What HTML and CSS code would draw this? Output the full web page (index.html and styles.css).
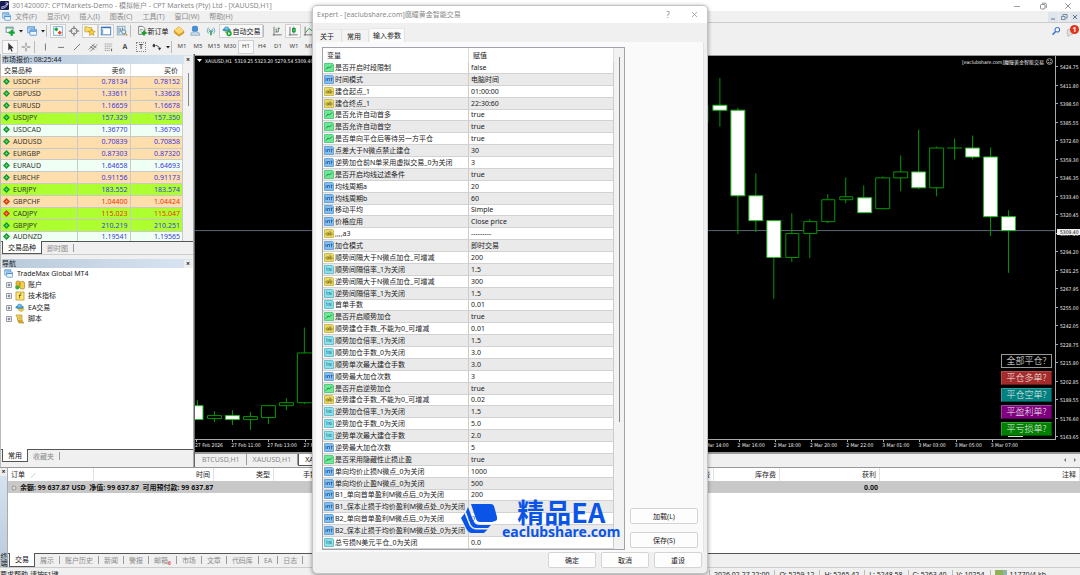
FILE: index.html
```
<!DOCTYPE html>
<html lang="zh-CN">
<head>
<meta charset="utf-8">
<title>301420007: CPTMarkets-Demo</title>
<link rel="stylesheet" href="styles.css">
</head>
<body>
<svg class="defs" aria-hidden="true">
  <symbol id="up" viewBox="0 0 8 8"><path d="M4 0 8 4 4 8 0 4Z" fill="#129a36"/><path d="M4 2.500v3M2.500 4h3" stroke="#7fe07f" stroke-width=".8"/></symbol>
  <symbol id="down" viewBox="0 0 8 8"><path d="M4 0 8 4 4 8 0 4Z" fill="#d83a12"/><path d="M4 2.500v3M2.500 4h3" stroke="#ff9a70" stroke-width=".8"/></symbol>
  <symbol id="bool" viewBox="0 0 10 9"><path d="M.5.5h8l1 1v7h-9z" fill="#6fe896" stroke="#5cc982"/><path d="M2 6.500 4 4l1.500 1L8 2.500" fill="none" stroke="#1a8f48"/></symbol>
  <symbol id="int" viewBox="0 0 10 9"><path d="M.5.5h8l1 1v7h-9z" fill="#86bdec" stroke="#6aa5d6"/><path d="M2 3v3M3.500 6V3.500h2V6M7.500 2.500v3.800M6.700 3.500h1.800" fill="none" stroke="#1d5fa8" stroke-width=".8"/></symbol>
  <symbol id="str" viewBox="0 0 10 9"><path d="M.5.5h8l1 1v7h-9z" fill="#e8d968" stroke="#c9bb58"/><path d="M4.300 3.500v3M6 2v4.500" fill="none" stroke="#7c6d12" stroke-width=".8"/><circle cx="3.200" cy="5" r="1.200" fill="none" stroke="#7c6d12" stroke-width=".7"/><circle cx="7" cy="5" r="1.200" fill="none" stroke="#7c6d12" stroke-width=".7"/></symbol>
  <symbol id="dbl" viewBox="0 0 10 9"><path d="M.5.5h8l1 1v7h-9z" fill="#8fe0ea" stroke="#68c0cd"/><path d="M2 3.500 3 2.700V6M5 6.200V3l2 3V2.700" fill="none" stroke="#2d8fa2" stroke-width=".8"/></symbol>
  <symbol id="windows" viewBox="0 0 12 12"><rect x="1" y="1" width="8" height="7" fill="#d5eafa" stroke="#5597d3"/><path d="M1 2.500h8" stroke="#5597d3"/><rect x="3.500" y="4" width="8" height="7" rx="1" fill="#eef7ff" stroke="#4b90cf"/><path d="M3.500 6h8" stroke="#4b90cf" stroke-width="1.500"/></symbol>
  <symbol id="caret" viewBox="0 0 6 6"><path d="M1 2h4L3 4.500Z" fill="#222"/></symbol>
  <symbol id="plusbox" viewBox="0 0 6 6"><path d="M.5.5h5v5h-5z" fill="#fff" stroke="#9a9a9a"/><path d="M1.500 3h3M3 1.500v3" stroke="#3a4f8a" stroke-width=".8"/></symbol>
  <symbol id="scroll" viewBox="0 0 10 10"><path d="M1 1h6v6H3L2 3Z" fill="#f4dc6c" stroke="#b58b1b" stroke-width=".7"/><path d="M3 7h4l2 2H4Z" fill="#e4b82a" stroke="#a67b10" stroke-width=".6"/><path d="M3.500 3h2.500M3.500 4.800h2.500" stroke="#b58b1b" stroke-width=".6"/></symbol>
  <symbol id="hat" viewBox="0 0 12 11"><path d="M4 5l5 0 2 2-3 3-4-2z" fill="#f2c537" stroke="#b78a15" stroke-width=".5"/><ellipse cx="5.500" cy="4.500" rx="5" ry="1.900" fill="#3c94c5"/><ellipse cx="5.500" cy="3" rx="2.800" ry="2.200" fill="#6cbce2" stroke="#2c7ba6" stroke-width=".5"/></symbol>
</svg>

<div class="app">
  <header class="titlebar">
    <svg class="logo" viewBox="0 0 10 10"><rect width="10" height="10" rx="1" fill="#151a55"/><path d="M1 7Q5 6.500 8.500 3M1.500 8.500Q6 8 8 5M6 2l3 .5L8 5" fill="none" stroke="#e6ecff" stroke-width=".9"/></svg>
    <span class="grow">301420007: CPTMarkets-Demo - 模拟帐户 - CPT Markets (Pty) Ltd - [XAUUSD,H1]</span>
    <button class="wbtn" aria-label="最小化"><svg viewBox="0 0 8 8"><path d="M1 4.500h6" stroke="#888" stroke-width=".8"/></svg></button>
    <button class="wbtn" aria-label="还原"><svg viewBox="0 0 8 8"><rect x="1.500" y="2.500" width="4.500" height="4.500" rx="1" fill="none" stroke="#777" stroke-width=".8"/><path d="M3 1.200h3.300q1 0 1 1V6" fill="none" stroke="#777" stroke-width=".8"/></svg></button>
    <button class="wbtn" aria-label="关闭"><svg viewBox="0 0 8 8"><path d="m1.300 1.300 5.400 5.400m0-5.400-5.400 5.400" stroke="#777" stroke-width=".8"/></svg></button>
  </header>
  <nav class="menu">
    <svg class="ic9"><use href="#windows"/></svg>
    <button>文件(F)</button><button>显示(V)</button><button>插入(I)</button><button>图表(C)</button><button>工具(T)</button><button>窗口(W)</button><button>帮助(H)</button>
    <span class="grow"></span>
    <button class="mdi" aria-label="最小化图表"><svg viewBox="0 0 8 8"><path d="M2 6h4" stroke="#5c7890"/></svg></button>
    <button class="mdi" aria-label="还原图表"><svg viewBox="0 0 8 8"><path d="M1.500 3.500h3.500v3H1.500zM3 3V1.500h4V5H5.500" fill="none" stroke="#5c7890" stroke-width=".8"/></svg></button>
    <button class="mdi" aria-label="关闭图表"><svg viewBox="0 0 8 8"><path d="m2 2 4 4m0-4L2 6" stroke="#5c7890"/></svg></button>
  </nav>
  <div class="toolbar first">
    <button class="tb" aria-label="新图表"><svg viewBox="0 0 14 14"><rect x="2.500" y="2.500" width="8" height="6" fill="#fff" stroke="#5b8aa5"/><path d="M2 3.500h9" stroke="#43a05c"/><path d="M9 5.500v7M5.500 9h7" stroke="#12a52c" stroke-width="2.600"/></svg></button>
    <button class="tb slim" aria-label="更多图表"><svg><use href="#caret"/></svg></button>
    <button class="tb" aria-label="配置文件"><svg viewBox="-1 -1 14 14"><use href="#windows" width="12" height="12"/></svg></button>
    <button class="tb slim" aria-label="更多配置"><svg><use href="#caret"/></svg></button>
    <i class="sep"></i>
    <button class="tb on" aria-label="市场报价"><svg viewBox="0 0 14 14"><rect x="2" y="2" width="10" height="10" fill="#fff" stroke="#6c9fd0"/><path d="M5 2.500 7.500 5 5 7.500 2.500 5Z" fill="#17a43a"/><path d="m9 6.500 2.500 2.500L9 11.500 6.500 9Z" fill="#e04b20"/></svg></button>
    <button class="tb" aria-label="数据窗口"><svg viewBox="0 0 14 14"><circle cx="7" cy="7" r="3.600" fill="none" stroke="#666"/><path d="M7 .8v4.500M7 8.700v4.500M.8 7h4.500M8.700 7h4.500" stroke="#666"/></svg></button>
    <button class="tb on" aria-label="导航"><svg viewBox="0 0 14 14"><path d="M1 2h3l1 1h4v5H1z" fill="#f6dc69" stroke="#b99024" stroke-width=".7"/><path d="m9 4.500 1.200 2.600 2.800.3-2 2 .6 2.800L9 10.800l-2.600 1.400.6-2.800-2-2 2.800-.3z" fill="#ffcf31" stroke="#b3841c" stroke-width=".7"/></svg></button>
    <button class="tb on" aria-label="终端"><svg viewBox="0 0 14 14"><rect x="1.500" y="2.500" width="11" height="9" fill="#fff" stroke="#3273b8"/><path d="M2 3h10" stroke="#3273b8" stroke-width="1.500"/><path d="M3 5v6" stroke="#79aee0" stroke-width="1.500"/></svg></button>
    <button class="tb" aria-label="策略测试"><svg viewBox="0 0 14 14"><rect x="1.500" y="1.500" width="9" height="10" fill="#e2eef6" stroke="#8aa3b5"/><path d="M3.500 3v7M5.500 4v4M7.500 3v5" stroke="#4f7b9c"/><circle cx="9" cy="8" r="2.400" fill="#d9f1ff" stroke="#5c7e98"/><path d="m10.800 9.800 2.200 2.500" stroke="#c99a2e" stroke-width="1.500"/></svg></button>
    <i class="sep"></i>
    <button class="tb text"><svg viewBox="0 0 12 14"><path d="M2 1.500h5l2.500 2.500v7H2z" fill="#fff" stroke="#666"/><path d="M3.500 5h4M3.500 7h3" stroke="#8a8a8a"/><path d="M8.500 6.500v6M5.500 9.500h6" stroke="#12a52c" stroke-width="2.400"/></svg>新订单</button>
    <button class="tb" aria-label="市场"><svg viewBox="0 0 14 14"><path d="M1.500 6 7 2l5.500 5v2.500L7 13l-5.500-4z" fill="#e5a829" stroke="#a36e0c" stroke-width=".6"/><path d="M1.500 6 7 2l5.500 5L7 10.500z" fill="#ffd970"/></svg></button>
    <button class="tb" aria-label="社区"><svg viewBox="0 0 14 14"><rect x="4" y="1.500" width="6" height="6" rx="1.500" fill="#3d8fe0" stroke="#2368ac" stroke-width=".6"/><path d="M2 12q0-4 3-4h4q3.500 0 3.500 4z" fill="#c5dced" stroke="#7894a8" stroke-width=".7"/></svg></button>
    <button class="tb" aria-label="信号"><svg viewBox="0 0 14 14"><path d="M4 3Q1 6.500 4 10M5.500 4.500q-1.500 2 0 4M10 3q3 3.500 0 7M8.500 4.500q1.500 2 0 4" fill="none" stroke="#5b9ec4"/><path d="M7 6v6" stroke="#36a64f" stroke-width="2"/></svg></button>
    <button class="tb text on"><svg viewBox="0 0 12 14"><use href="#hat" y="1" width="12" height="11"/><circle cx="8.500" cy="10" r="3.200" fill="#18a83a"/><path d="m7.500 8.300 2.700 1.700-2.700 1.700z" fill="#fff"/></svg>自动交易</button>
    <i class="sep wide"></i>
    <button class="tb" aria-label="柱状图"><svg viewBox="0 0 14 14"><path d="M3.500 2v10.500M2 11.500h10.500M6 4v5M8.500 3v5" fill="none" stroke="#666"/><path d="M6 8h2.500M8.500 4h2" stroke="#1a9a40"/></svg></button>
    <button class="tb on" aria-label="阴阳烛"><svg viewBox="0 0 14 14"><path d="M3.500 2v10.500M2 11.500h10.500" stroke="#666"/><path d="M8 2v8" stroke="#128434"/><rect x="6.500" y="4" width="3" height="4" fill="#3cc865" stroke="#128434"/></svg></button>
    <button class="tb" aria-label="折线图"><svg viewBox="0 0 14 14"><path d="M2.500 2v10.500M1 11.500h11" stroke="#666"/><path d="m3 9 4-5 4 3" fill="none" stroke="#1a9a40"/></svg></button>
    <span class="grow"></span>
    <button class="tb" aria-label="搜索"><svg viewBox="0 0 14 14"><circle cx="8.500" cy="5.500" r="2.700" fill="#fff" stroke="#3a6fd0" stroke-width="1.200"/><path d="m6.500 7.500-3.500 4" stroke="#3a6fd0" stroke-width="1.800"/></svg></button>
    <button class="tb bell" aria-label="通知"><svg viewBox="0 0 14 14"><path d="M1 8.500q0-4 4-4h4v5q-1 2-4 2l-2.500 2z" fill="#ddd" stroke="#aaa" stroke-width=".7"/></svg><b>1</b></button>
  </div>
  <div class="toolbar second">
    <button class="tb on" aria-label="光标"><svg viewBox="0 0 14 14"><path d="M5 2v9l2.200-2 1.600 3.500 1.300-.7L8.600 8.500h2.800z" fill="#333"/></svg></button>
    <button class="tb" aria-label="十字准线"><svg viewBox="0 0 14 14"><path d="M7 2v4M7 8v4M2 7h4M8 7h4" stroke="#666"/></svg></button>
    <i class="sep thin"></i>
    <button class="tb" aria-label="垂直线"><svg viewBox="0 0 14 14"><path d="M7.500 3v8" stroke="#666"/></svg></button>
    <button class="tb" aria-label="水平线"><svg viewBox="0 0 14 14"><path d="M3.500 7.500h7" stroke="#666"/></svg></button>
    <button class="tb" aria-label="趋势线"><svg viewBox="0 0 14 14"><path d="m3.500 10.500 7-7" stroke="#666"/></svg></button>
    <button class="tb" aria-label="通道"><svg viewBox="0 0 14 14"><path d="m2 10 7-7M4 12l8-8M3.500 6.500 9 10M5.500 4.500 11 8" stroke="#555" stroke-width=".8"/></svg></button>
    <button class="tb" aria-label="斐波纳契"><svg viewBox="0 0 14 14"><path d="M2 3.500h9M2 6h9M2 8.500h7M2 11h6" stroke="#777" stroke-width=".8" stroke-dasharray="1.500 .7"/><path d="M10 9v3" stroke="#444"/></svg></button>
    <button class="tb letter">A</button>
    <button class="tb letter"><span class="dotted">T</span></button>
    <button class="tb" aria-label="箭头"><svg viewBox="0 0 14 14"><path d="m3.500 3 2 2.500-2 2-2-2zM8 8h4l-2 3z" fill="#333"/><path d="m6 5 4 2.500" stroke="#333"/></svg></button>
    <button class="tb slim" aria-label="更多箭头"><svg><use href="#caret"/></svg></button>
    <i class="sep thin"></i>
    <button class="tb tf">M1</button><button class="tb tf">M5</button><button class="tb tf">M15</button><button class="tb tf">M30</button><button class="tb tf on">H1</button><button class="tb tf">H4</button><button class="tb tf">D1</button><button class="tb tf">W1</button><button class="tb tf">MN</button>
  </div>

  <div class="work">
    <aside class="side">
      <section class="watch">
        <h2 class="ptitle"><span>市场报价: 08:25:44</span><button aria-label="关闭">×</button></h2>
        <div class="watchbody">
          <table class="quotes">
            <thead><tr><th>交易品种</th><th>卖价</th><th>买价</th></tr></thead>
            <tbody>
            <tr class="o"><td><svg><use href="#up"/></svg>USDCHF</td><td>0.78134</td><td>0.78152</td></tr>
            <tr class="o"><td><svg><use href="#up"/></svg>GBPUSD</td><td>1.33611</td><td>1.33628</td></tr>
            <tr class="o"><td><svg><use href="#up"/></svg>EURUSD</td><td>1.16659</td><td>1.16678</td></tr>
            <tr class="g"><td><svg><use href="#up"/></svg>USDJPY</td><td>157.329</td><td>157.350</td></tr>
            <tr class="m"><td><svg><use href="#up"/></svg>USDCAD</td><td>1.36770</td><td>1.36790</td></tr>
            <tr class="o"><td><svg><use href="#up"/></svg>AUDUSD</td><td>0.70839</td><td>0.70858</td></tr>
            <tr class="o"><td><svg><use href="#up"/></svg>EURGBP</td><td>0.87303</td><td>0.87320</td></tr>
            <tr class="m"><td><svg><use href="#up"/></svg>EURAUD</td><td>1.64658</td><td>1.64693</td></tr>
            <tr class="o"><td><svg><use href="#up"/></svg>EURCHF</td><td>0.91156</td><td>0.91173</td></tr>
            <tr class="g"><td><svg><use href="#up"/></svg>EURJPY</td><td>183.552</td><td>183.574</td></tr>
            <tr class="o dn"><td><svg><use href="#down"/></svg>GBPCHF</td><td>1.04400</td><td>1.04424</td></tr>
            <tr class="g dn"><td><svg><use href="#down"/></svg>CADJPY</td><td>115.023</td><td>115.047</td></tr>
            <tr class="g"><td><svg><use href="#up"/></svg>GBPJPY</td><td>210.219</td><td>210.251</td></tr>
            <tr class="m"><td><svg><use href="#up"/></svg>AUDNZD</td><td>1.19541</td><td>1.19565</td></tr>
            </tbody>
          </table>
          <div class="vbar"><i></i></div>
        </div>
        <div class="tabs"><button class="sel">交易品种</button><button>即时图</button></div>
      </section>
      <section class="navi">
        <h2 class="ptitle"><span>导航</span><button aria-label="关闭">×</button></h2>
        <div class="tree">
          <p><svg class="ic9"><use href="#windows"/></svg>TradeMax Global MT4</p>
          <ul>
            <li><svg class="pb"><use href="#plusbox"/></svg><svg class="ic10" viewBox="0 0 10 10"><rect x="1" y="1" width="4" height="7" rx="1.500" fill="#e9bb30" stroke="#9e7612" stroke-width=".6"/><rect x="5" y="1.500" width="4.500" height="7.500" rx="1.500" fill="#f3cf4b" stroke="#9e7612" stroke-width=".6"/><circle cx="2.300" cy="7.500" r="2" fill="#2bb53f"/></svg>账户</li>
            <li><svg class="pb"><use href="#plusbox"/></svg><svg class="ic10" viewBox="0 0 10 10"><rect x="1" y="1" width="8" height="8" fill="#ffe873" stroke="#b7962a" stroke-width=".8"/><path d="M6.500 2.500q-1.500-.5-1.700 1.500L4.300 7.500M3.700 4.500h2.600" fill="none" stroke="#705a10" stroke-width=".8"/></svg>技术指标</li>
            <li><svg class="pb"><use href="#plusbox"/></svg><svg class="ic10"><use href="#hat"/></svg>EA交易</li>
            <li><svg class="pb"><use href="#plusbox"/></svg><svg class="ic10"><use href="#scroll"/></svg>脚本</li>
          </ul>
        </div>
        <div class="tabs"><button class="sel">常用</button><button>收藏夹</button></div>
      </section>
    </aside>

    <main class="charts">
      <div class="chart">
        <div class="plot">
          <svg viewBox="195 56 861 385" preserveAspectRatio="none">
            <path d="M195 231.500H1056" stroke="#5d6878"/>
            <g fill="#000" stroke="#009a00">
              <path d="M197.500 402v6M214.500 413v11M232.500 412v15M250.500 414v18M268.500 407v19M286.500 400v12M304.500 329v77M720.500 78v49M738.500 108v127M756.500 174v59M774.500 221v79M792.500 214v49M810.500 220v39M828.500 195v29M846.500 178v26M864.500 186v20M883.500 177v10M901.500 156v36M919.500 130v60M937.500 147v50M955.500 139v21M948 148.500h15M973.500 136v24M991.500 148v89M1009.500 211v63"/>
              <path d="M207.500 417.500h14v3h-14zM243.500 418.500h14v3h-14zM261.500 407.500h14v12h-14zM279.500 404.500h14v3h-14zM297.500 354.500h16v50h-16zM695.500 105.500h13v17h-13zM786.500 234.500h13v24h-13zM804.500 222.500h13v12h-13zM822.500 200.500h13v22h-13zM840.500 197.500h13v3h-13zM876.500 178.500h14v31h-14zM894.500 172.500h14v6h-14zM930.500 148.500h14v40h-14z"/>
            </g>
            <path d="M194 407.500h9v14h-9zM225.500 417.500h14v4h-14zM713.500 105.500h14v5h-14zM731.500 110.500h14v86h-14zM749.500 196.500h14v25h-14zM767.500 221.500h14v37h-14zM858.500 198.500h14v15h-14zM912.500 172.500h14v16h-14zM966.500 148.500h14v9h-14zM984.500 157.500h14v60h-14zM1002.500 217.500h14v14h-14z" fill="#fff" stroke="#22bb22"/>
            <path d="M1009 438.500h15" stroke="#ddd"/>
          </svg>
          <div class="info"><svg><path d="M0 1h5L2.500 4Z" fill="#fff"/></svg>XAUUSD,H1&nbsp; 5319.25 5323.20 5279.54 5309.40</div>
          <div class="ea">[eaclubshare.com]魔瞳黄金智能交易 <svg viewBox="0 0 8 8"><g fill="none" stroke="#fff" stroke-width=".7"><circle cx="4" cy="4" r="3.300"/><path d="M2.300 4.800q1.700 1.800 3.400 0M2.700 2.500v1M5.300 2.500v1"/></g></svg></div>
          <div class="actions">
            <button class="all">全部平仓?</button><button class="long">平仓多单?</button><button class="short">平仓空单?</button><button class="win">平盈利单?</button><button class="loss">平亏损单?</button>
          </div>
        </div>
        <div class="prices">
          <span>5424.75</span><span>5411.80</span><span>5398.50</span><span>5385.55</span><span>5372.60</span><span>5359.30</span><span>5346.35</span><span>5333.40</span><span>5320.45</span><span>5307.15</span><span>5294.20</span><span>5281.25</span><span>5267.95</span><span>5255.00</span><span>5242.05</span><span>5228.75</span><span>5215.80</span><span>5202.85</span><span>5189.55</span><span>5176.60</span><span>5163.65</span>
          <b>5309.40</b>
        </div>
        <div class="times">
          <span>27 Feb 2026</span><span>27 Feb 11:00</span><span>27 Feb 13:00</span><span>27 Feb 15:00</span><span class="mar">2 Mar 14:00</span><span>2 Mar 16:00</span><span>2 Mar 18:00</span><span>2 Mar 20:00</span><span>2 Mar 22:00</span><span>3 Mar 01:00</span><span>3 Mar 03:00</span><span>3 Mar 05:00</span><span>3 Mar 07:00</span>
        </div>
      </div>
      <div class="ctabs"><button>BTCUSD,H1</button><button>XAUUSD,H1</button><button class="sel">XAUUSD,H1</button><span class="grow"></span><button class="arr" aria-label="向左"><svg viewBox="0 0 4 6"><path d="M3 1v4L1 3Z" fill="#777"/></svg></button><button class="arr" aria-label="向右"><svg viewBox="0 0 4 6"><path d="M1 1v4L3 3Z" fill="#777"/></svg></button></div>
    </main>
  </div>

  <section class="terminal">
    <div class="strip"><button aria-label="关闭">×</button><span>终端</span></div>
    <div class="tbody">
      <table class="orders">
        <colgroup><col class="c86"><col class="c120"><col class="c60"><col class="c60"><col><col class="c66"><col class="c100"><col class="c200"></colgroup>
        <thead><tr><th>订单 &nbsp; <small>∕</small></th><th>时间</th><th>类型</th><th class="lots">手数</th><th>手续费</th><th>库存费</th><th>获利</th><th>注释</th></tr></thead>
        <tbody><tr><td colspan="6"><svg viewBox="0 0 6 6"><circle cx="3" cy="3" r="2" fill="#ddd" stroke="#888" stroke-width=".8"/></svg>余额: 99 637.87 USD &nbsp;净值: 99 637.87 &nbsp;可用预付款: 99 637.87</td><td>0.00</td><td></td></tr></tbody>
      </table>
      <div class="tabs"><button class="sel">交易</button><button>展示</button><button>账户历史</button><button>新闻</button><button>警报</button><button>邮箱<sub>6</sub></button><button>市场</button><button>文章</button><button>代码库</button><button>EA</button><button>日志</button></div>
    </div>
  </section>
  <footer class="status"><span class="grow">要求帮助,请按F1键</span><span>2026.02.27 22:00</span><span>O: 5259.12</span><span>H: 5265.42</span><span>L: 5248.58</span><span>C: 5263.40</span><span>V: 10254</span><span class="net"><svg viewBox="0 0 13 8"><path d="M1 0v8M3 0v8M5 0v8M7 0v8" stroke="#6f9c1c" stroke-width="1.500"/><path d="M9 0v8M11 0v8" stroke="#2a7a6c"/></svg>11770/4 kb</span></footer>
</div>

<div class="dialog" role="dialog" aria-label="Expert">
  <div class="dtitle"><span class="grow">Expert - [eaclubshare.com]魔瞳黄金智能交易</span><button aria-label="帮助">?</button><button aria-label="关闭"><svg viewBox="0 0 8 8"><path d="m1 1 6 6m0-6L1 7" stroke="#888" stroke-width=".8"/></svg></button></div>
  <div class="dtabs"><button>关于</button><button>常用</button><button class="sel">输入参数</button></div>
  <div class="dpanel">
    <div class="grid">
      <table class="params">
        <thead><tr><th>变量</th><th>赋值</th></tr></thead>
        <tbody>
        <tr><td><svg><use href="#bool"/></svg>是否开启时段限制</td><td>false</td></tr>
        <tr><td><svg><use href="#int"/></svg>时间模式</td><td>电脑时间</td></tr>
        <tr><td><svg><use href="#str"/></svg>建仓起点_1</td><td>01:00:00</td></tr>
        <tr><td><svg><use href="#str"/></svg>建仓终点_1</td><td>22:30:60</td></tr>
        <tr><td><svg><use href="#bool"/></svg>是否允许自动首多</td><td>true</td></tr>
        <tr><td><svg><use href="#bool"/></svg>是否允许自动首空</td><td>true</td></tr>
        <tr><td><svg><use href="#bool"/></svg>是否单向平仓后等待另一方平仓</td><td>true</td></tr>
        <tr><td><svg><use href="#int"/></svg>点差大于N微点禁止建仓</td><td>30</td></tr>
        <tr><td><svg><use href="#int"/></svg>逆势加仓前N单采用虚拟交易_0为关闭</td><td>3</td></tr>
        <tr><td><svg><use href="#bool"/></svg>是否开启均线过滤条件</td><td>true</td></tr>
        <tr><td><svg><use href="#int"/></svg>均线周期a</td><td>20</td></tr>
        <tr><td><svg><use href="#int"/></svg>均线周期b</td><td>60</td></tr>
        <tr><td><svg><use href="#int"/></svg>移动平均</td><td>Simple</td></tr>
        <tr><td><svg><use href="#int"/></svg>价格应用</td><td>Close price</td></tr>
        <tr><td><svg><use href="#str"/></svg>,,,,a3</td><td>---------</td></tr>
        <tr><td><svg><use href="#int"/></svg>加仓模式</td><td>即时交易</td></tr>
        <tr><td><svg><use href="#str"/></svg>顺势间隔大于N微点加仓_可增减</td><td>200</td></tr>
        <tr><td><svg><use href="#dbl"/></svg>顺势间隔倍率_1为关闭</td><td>1.5</td></tr>
        <tr><td><svg><use href="#str"/></svg>逆势间隔大于N微点加仓_可增减</td><td>300</td></tr>
        <tr><td><svg><use href="#dbl"/></svg>逆势间隔倍率_1为关闭</td><td>1.5</td></tr>
        <tr><td><svg><use href="#dbl"/></svg>首单手数</td><td>0.01</td></tr>
        <tr><td><svg><use href="#bool"/></svg>是否开启顺势加仓</td><td>true</td></tr>
        <tr><td><svg><use href="#str"/></svg>顺势建仓手数_不能为0_可增减</td><td>0.01</td></tr>
        <tr><td><svg><use href="#dbl"/></svg>顺势加仓倍率_1为关闭</td><td>1.5</td></tr>
        <tr><td><svg><use href="#dbl"/></svg>顺势加仓手数_0为关闭</td><td>3.0</td></tr>
        <tr><td><svg><use href="#dbl"/></svg>顺势单次最大建仓手数</td><td>3.0</td></tr>
        <tr><td><svg><use href="#int"/></svg>顺势最大加仓次数</td><td>3</td></tr>
        <tr><td><svg><use href="#bool"/></svg>是否开启逆势加仓</td><td>true</td></tr>
        <tr><td><svg><use href="#str"/></svg>逆势建仓手数_不能为0_可增减</td><td>0.02</td></tr>
        <tr><td><svg><use href="#dbl"/></svg>逆势加仓倍率_1为关闭</td><td>1.5</td></tr>
        <tr><td><svg><use href="#dbl"/></svg>逆势加仓手数_0为关闭</td><td>5.0</td></tr>
        <tr><td><svg><use href="#dbl"/></svg>逆势单次最大建仓手数</td><td>2.0</td></tr>
        <tr><td><svg><use href="#int"/></svg>逆势最大加仓次数</td><td>5</td></tr>
        <tr><td><svg><use href="#bool"/></svg>是否采用隐藏性止损止盈</td><td>true</td></tr>
        <tr><td><svg><use href="#int"/></svg>单向均价止损N微点_0为关闭</td><td>1000</td></tr>
        <tr><td><svg><use href="#int"/></svg>单向均价止盈N微点_0为关闭</td><td>500</td></tr>
        <tr><td><svg><use href="#int"/></svg>B1_单向首单盈利M微点后_0为关闭</td><td>200</td></tr>
        <tr><td><svg><use href="#int"/></svg>B1_保本止损于均价盈利M微点处_0为关闭</td><td></td></tr>
        <tr><td><svg><use href="#int"/></svg>B2_单向首单盈利M微点后_0为关闭</td><td>0</td></tr>
        <tr><td><svg><use href="#int"/></svg>B2_保本止损于均价盈利M微点处_0为关闭</td><td>0</td></tr>
        <tr><td><svg><use href="#dbl"/></svg>总亏损N美元平仓_0为关闭</td><td>0.0</td></tr>
        </tbody>
      </table>
      <div class="vbar"><i></i></div>
    </div>
    <div class="dside"><button class="btn">加载(L)</button><button class="btn">保存(S)</button></div>
  </div>
  <div class="dfoot"><button class="btn">确定</button><button class="btn">取消</button><button class="btn">重设</button></div>
  <div class="mark">
    <svg viewBox="0 0 36 30"><path d="M10 0h20q2 0 3 2l3 11q1 3-2 4l-3 1H19q-3 0-4-3z" fill="#0a55e8"/><path d="m7 3 5 13q2 5 6 5h12l-3 3H15q-4 0-6-5L5 8z" fill="#0a55e8"/><path d="m4 9 4 10q2 6 7 6h12l-4 4H11q-4 0-6-5L0 14z" fill="#0a55e8"/><path d="m8 2 5 14q2 4 6 4h13M4 9l4 10q2 6 7 6h12" fill="none" stroke="#eef2fa" stroke-width="1"/></svg>
    <div><strong>精品EA</strong><span>eaclubshare.com</span></div>
  </div>
</div>
</body>
</html>
```
FILE: styles.css
```
* { box-sizing: border-box; }
body { margin: 0; background: #f0f0f0; color: #222; font: 7px/11px "Noto Sans", "Noto Sans CJK SC", sans-serif; }
button { margin: 0; padding: 0; border: 0; background: none; color: inherit; font: inherit; white-space: nowrap; }
svg { display: block; flex: none; }
table { border-collapse: separate; border-spacing: 0; table-layout: fixed; width: 100%; }
th, td { padding: 0; font-weight: 400; white-space: nowrap; overflow: hidden; }
.defs { position: absolute; width: 0; height: 0; }
.grow { flex: 1; }
.app { display: flex; flex-direction: column; height: 100vh; overflow: hidden; }

.titlebar { display: flex; align-items: center; height: 11px; background: #fff; color: #8a8a8a; white-space: nowrap; }
.logo { width: 9px; height: 9px; margin-right: 3px; }
.wbtn { width: 26px; display: flex; justify-content: center; }
.wbtn svg { width: 8px; height: 8px; }
.titlebar .wbtn:last-child { width: 24px; }
.menu { display: flex; align-items: center; gap: 10px; height: 12px; padding-left: 2px; border-bottom: 1px solid #ccc; color: #8c8c8c; }
.menu .ic9 { margin-right: -6px; }
.ic9 { width: 9px; height: 9px; }
.ic10 { width: 10px; height: 10px; }
.mdi { width: 10px; height: 10px; margin-left: -9px; background: #dfe5ea; }
.mdi svg { width: 8px; height: 8px; margin: 0 auto; }

.toolbar { display: flex; align-items: center; height: 15px; padding-left: 2px; }
.first { height: 16px; }
.tb { position: relative; display: flex; align-items: center; justify-content: center; flex: none; width: 16px; height: 14px; border: 1px solid transparent; }
.tb svg { width: 12px; height: 12px; }
.tb.on { background: #f8f8f8; border-color: #cfcfcf; }
.slim { width: 6px; }
.slim svg { width: 6px; height: 6px; }
.text { width: 37px; color: #111; }
.text.on { width: 44px; }
.text svg { width: 10px; margin-right: 1px; }
.sep { flex: none; width: 4px; height: 12px; border-left: 1px solid #bbb; }
.sep.wide { width: 6px; }
.sep.thin { width: 3px; }
.letter { font-weight: 700; color: #555; }
.dotted { padding: 0 2px; border: 1px dotted #888; line-height: 8px; }
.tf { font-size: 6px; color: #444; }
.bell b { position: absolute; right: 0; top: 0; width: 9px; height: 9px; border-radius: 5px; background: #dd3418; color: #fff; line-height: 9px; }

.work { display: flex; flex: 1; min-height: 0; }
.side { display: flex; flex-direction: column; flex: none; width: 194px; border-left: 1px solid #bbb; border-right: 1px solid #aaa; }
.ptitle { display: flex; align-items: center; justify-content: space-between; height: 9px; margin: 0 1px; background: linear-gradient(90deg, #b9cadb, #d8e4f1); color: #222; font-size: 7px; font-weight: 400; line-height: 9px; }
.ptitle button { width: 8px; background: #eee; font-weight: 700; line-height: 8px; }
.watch { display: flex; flex-direction: column; height: 200px; padding-top: 1px; }
.watchbody { display: flex; flex: 1; min-height: 0; overflow: hidden; background: #fff; border-bottom: 1px solid #555; }
.quotes { flex: 1; height: 180px; }
.quotes th { height: 13px; border-right: 1px solid #ddd; border-bottom: 1px solid #ccc; text-align: right; padding-right: 4px; }
.quotes th:first-child { width: 77px; padding-left: 3px; text-align: left; }
.quotes td { border-right: 1px solid #c9c9c9; border-bottom: 1px solid #c9c9c9; color: #3a35e0; text-align: right; padding-right: 2px; line-height: 10px; }
.quotes td:first-child { padding-left: 2px; text-align: left; color: #333; }
.quotes svg { display: inline-block; width: 7px; height: 7px; margin-right: 3px; vertical-align: -1px; }
.o { background: #ffdead; }
.g { background: #adff2f; }
.m { background: #f0fff4; }
.quotes .dn td + td { color: #f03010; }
.vbar { display: flex; justify-content: center; flex: none; width: 10px; padding-top: 9px; background: #f2f2f2; }
.vbar i { width: 1px; height: 33px; background: #888; }
.tabs { display: flex; flex: none; height: 12px; color: #8a8a8a; }
.tabs button { position: relative; padding: 0 6px 0 5px; }
.tabs button:not(.sel)::after { content: ""; position: absolute; right: 0; top: 2px; height: 8px; border-right: 1px solid #999; }
.tabs .sel { background: #fff; border: 1px solid #555; border-top: 0; color: #111; margin: -1px 0 0 1px; padding: 0 5px; }
.navi { display: flex; flex-direction: column; flex: 1; padding: 4px 0 5px; border-top: 1px solid #ccc; }
.tree { flex: 1; background: #fff; border-bottom: 1px solid #555; padding: 0 3px; }
.tree p { display: flex; align-items: center; gap: 4px; margin: 0; height: 11px; }
.tree ul { margin: 0; padding: 0 0 0 2px; list-style: none; }
.tree li { display: flex; align-items: center; gap: 3px; height: 11px; }
.tree li:nth-child(2n) { margin-bottom: 1px; }
.pb { width: 6px; height: 6px; }

.charts { display: flex; flex-direction: column; flex: 1; min-width: 0; border-left: 1px solid #666; }
.chart { display: grid; flex: 1; grid-template-columns: 1fr 24px; grid-template-rows: 1fr 12px; margin-top: 1px; background: #000; color: #eee; font: 5px/6px "DejaVu Sans Condensed", "Noto Sans CJK SC", sans-serif; min-height: 0; border-top: 1px solid #999; }
.plot { position: relative; min-height: 0; border-right: 1px solid #aaa; border-bottom: 1px solid #aaa; }
.plot > svg { position: absolute; width: 100%; height: 100%; }
.info { position: absolute; left: 2px; top: 2px; display: flex; white-space: nowrap; }
.info svg { width: 6px; height: 5px; margin-right: 2px; }
.ea { position: absolute; right: 2px; top: 2px; display: flex; align-items: center; gap: 2px; }
.ea svg { width: 7px; height: 7px; }
.actions { position: absolute; right: 3px; bottom: 3px; display: grid; gap: 3px; }
.actions button { width: 51px; height: 14px; border: 1px solid #999; color: #eee; font: 300 9px/12px "Noto Sans CJK SC", sans-serif; }
.all { background: #000; }
.actions .long { background: #a52a2a; border-color: #b84a4a #701515 #701515 #b84a4a; }
.actions .short { background: #008080; border-color: #30a0a0 #005050 #005050 #30a0a0; }
.actions .win { background: #800080; border-color: #a040a0 #500050 #500050 #a040a0; }
.actions .loss { background: #008000; border-color: #30a030 #005000 #005000 #30a030; }
.prices { position: relative; display: flex; flex-direction: column; justify-content: space-between; padding-top: 8px; }
.prices span::before { content: ""; display: inline-block; width: 2px; height: 1px; margin-right: 2px; background: #aaa; vertical-align: 2px; }
.prices b { position: absolute; left: 1px; right: 0; top: 173px; padding-left: 3px; background: #eee; color: #111; font-weight: 400; }
.times { grid-column: 1 / 3; display: grid; grid-template-columns: repeat(23, minmax(0, 1fr)); padding: 2px 53px 0 0; white-space: nowrap; }
.times span { position: relative; }
.times span::before { content: ""; position: absolute; top: -2px; left: 1px; width: 1px; height: 2px; background: #aaa; }
.times .mar { grid-column: 15; }
.ctabs { display: flex; flex: none; align-items: flex-start; height: 15px; padding-left: 1px; border-top: 2px solid #999; color: #8a8a8a; }
.ctabs button { padding: 0 6px; border-right: 1px solid #999; line-height: 11px; }
.ctabs .sel { background: #fff; border: 1px solid #555; border-top: 0; color: #111; }
.ctabs .arr { margin-top: 3px; padding: 0 3px; border: 0; }
.arr svg { width: 4px; height: 6px; }

.terminal { display: flex; flex: none; height: 100px; border-top: 1px solid #999; }
.strip { display: flex; flex-direction: column; justify-content: space-between; width: 8px; background: linear-gradient(#d8e4f1, #b9cadb); border-right: 1px solid #aaa; }
.strip button { height: 8px; background: #eee; font-weight: 700; line-height: 8px; }
.strip span { writing-mode: vertical-rl; width: 7px; line-height: 7px; }
.tbody { display: flex; flex-direction: column; flex: 1; min-width: 0; background: #fff; }
.orders th { height: 13px; padding-right: 3px; border-right: 1px solid #e2e2e2; text-align: right; }
.orders th:first-child, .orders .lots { padding-left: 3px; text-align: left; }
.orders .lots { padding-left: 29px; border: 0; }
.orders small { font-size: 5px; color: #888; }
.orders td { height: 12px; background: #c8c8c8; font-weight: 700; text-align: right; padding-right: 2px; color: #111; }
.orders td:first-child { padding-left: 3px; text-align: left; }
.orders svg { display: inline-block; width: 6px; height: 6px; margin-right: 3px; vertical-align: -1px; }
.c86 { width: 86px; } .c120 { width: 120px; } .c60 { width: 60px; } .c66 { width: 66px; } .c100 { width: 100px; } .c200 { width: 200px; }
.tbody .tabs { margin-top: auto; height: 14px; background: #f0f0f0; border-top: 1px solid #555; }
.tabs sub { color: #f04050; font-size: 5px; line-height: 5px; font-weight: 700; }
.status { display: flex; flex: none; height: 8px; padding: 2px 29px 0 0; border-top: 1px solid #ccc; line-height: 9px; overflow: hidden; white-space: nowrap; }
.status span:not(.grow) { padding: 0 5px 0 4px; border-left: 1px solid #bbb; }
.status .net { display: flex; gap: 2px; }
.net svg { width: 13px; height: 8px; }

.dialog { position: absolute; left: 312px; top: 5px; bottom: 1px; width: 396px; display: flex; flex-direction: column; overflow: hidden; border: 1px solid #c4c4c4; border-radius: 5px; background: #f0f0f0; box-shadow: 0 1px 4px #0006; }
.dtitle { display: flex; align-items: center; flex: none; height: 17px; padding: 0 0 0 4px; background: #fff; color: #8a8a8a; }
.dtitle button { width: 26px; font-size: 8px; }
.dtitle button svg { width: 7px; height: 7px; margin: 0 auto; }
.dtabs { display: flex; flex: none; align-items: flex-end; height: 19px; padding-left: 3px; }
.dtabs button { height: 13px; padding: 0 7px 0 4px; background: #f3f3f3; border-right: 1px solid #e2e2e2; border-top: 1px solid #e6e6e6; margin-right: 1px; }
.dtabs .sel { height: 14px; padding: 0 3px; background: #fbfbfb; }
.dpanel { display: flex; flex: 1; min-height: 0; margin: 0 3px; padding: 5px 5px 2px 6px; background: #fafafa; border-right: 1px solid #e4e4e4; }
.grid { display: flex; flex: none; width: 303px; border: 1px solid #a0a4aa; background: #fff; overflow: hidden; }
.params { height: 100%; flex: 1; }
.params th { height: 14px; padding-left: 4px; text-align: left; border-right: 1px solid #ddd; }
.params th:first-child { width: 146px; }
.params td { padding-left: 2px; border-right: 1px solid #ccc; border-bottom: 1px solid #d2d2d2; line-height: 9px; }
.params td:first-child { padding-left: 1px; }
.params tbody tr:nth-child(2n) { background: #eaeaea; }
.params svg { display: inline-block; width: 10px; height: 9px; margin-right: 1px; vertical-align: -2px; }
.grid .vbar i { height: 365px; }
.dside { display: flex; flex-direction: column; justify-content: flex-end; gap: 8px; padding: 0 0 2px 5px; }
.btn { width: 48px; height: 16px; border: 1px solid #d4d4d4; border-radius: 2px; background: #fdfdfd; }
.dside .btn { width: 68px; }
.dfoot { display: flex; flex: none; justify-content: flex-end; gap: 5px; height: 21px; padding: 0 5px; }
.mark { position: absolute; left: 148px; bottom: 34px; display: flex; align-items: center; color: #0a55e8; }
.mark svg { width: 36px; height: 30px; }
.mark div { display: flex; flex-direction: column; align-items: center; margin-left: 5px; }
.mark strong { font: 700 27px/27px "Noto Sans CJK SC", sans-serif; }
.mark span { font-size: 14px; font-weight: 700; line-height: 14px; }
```
